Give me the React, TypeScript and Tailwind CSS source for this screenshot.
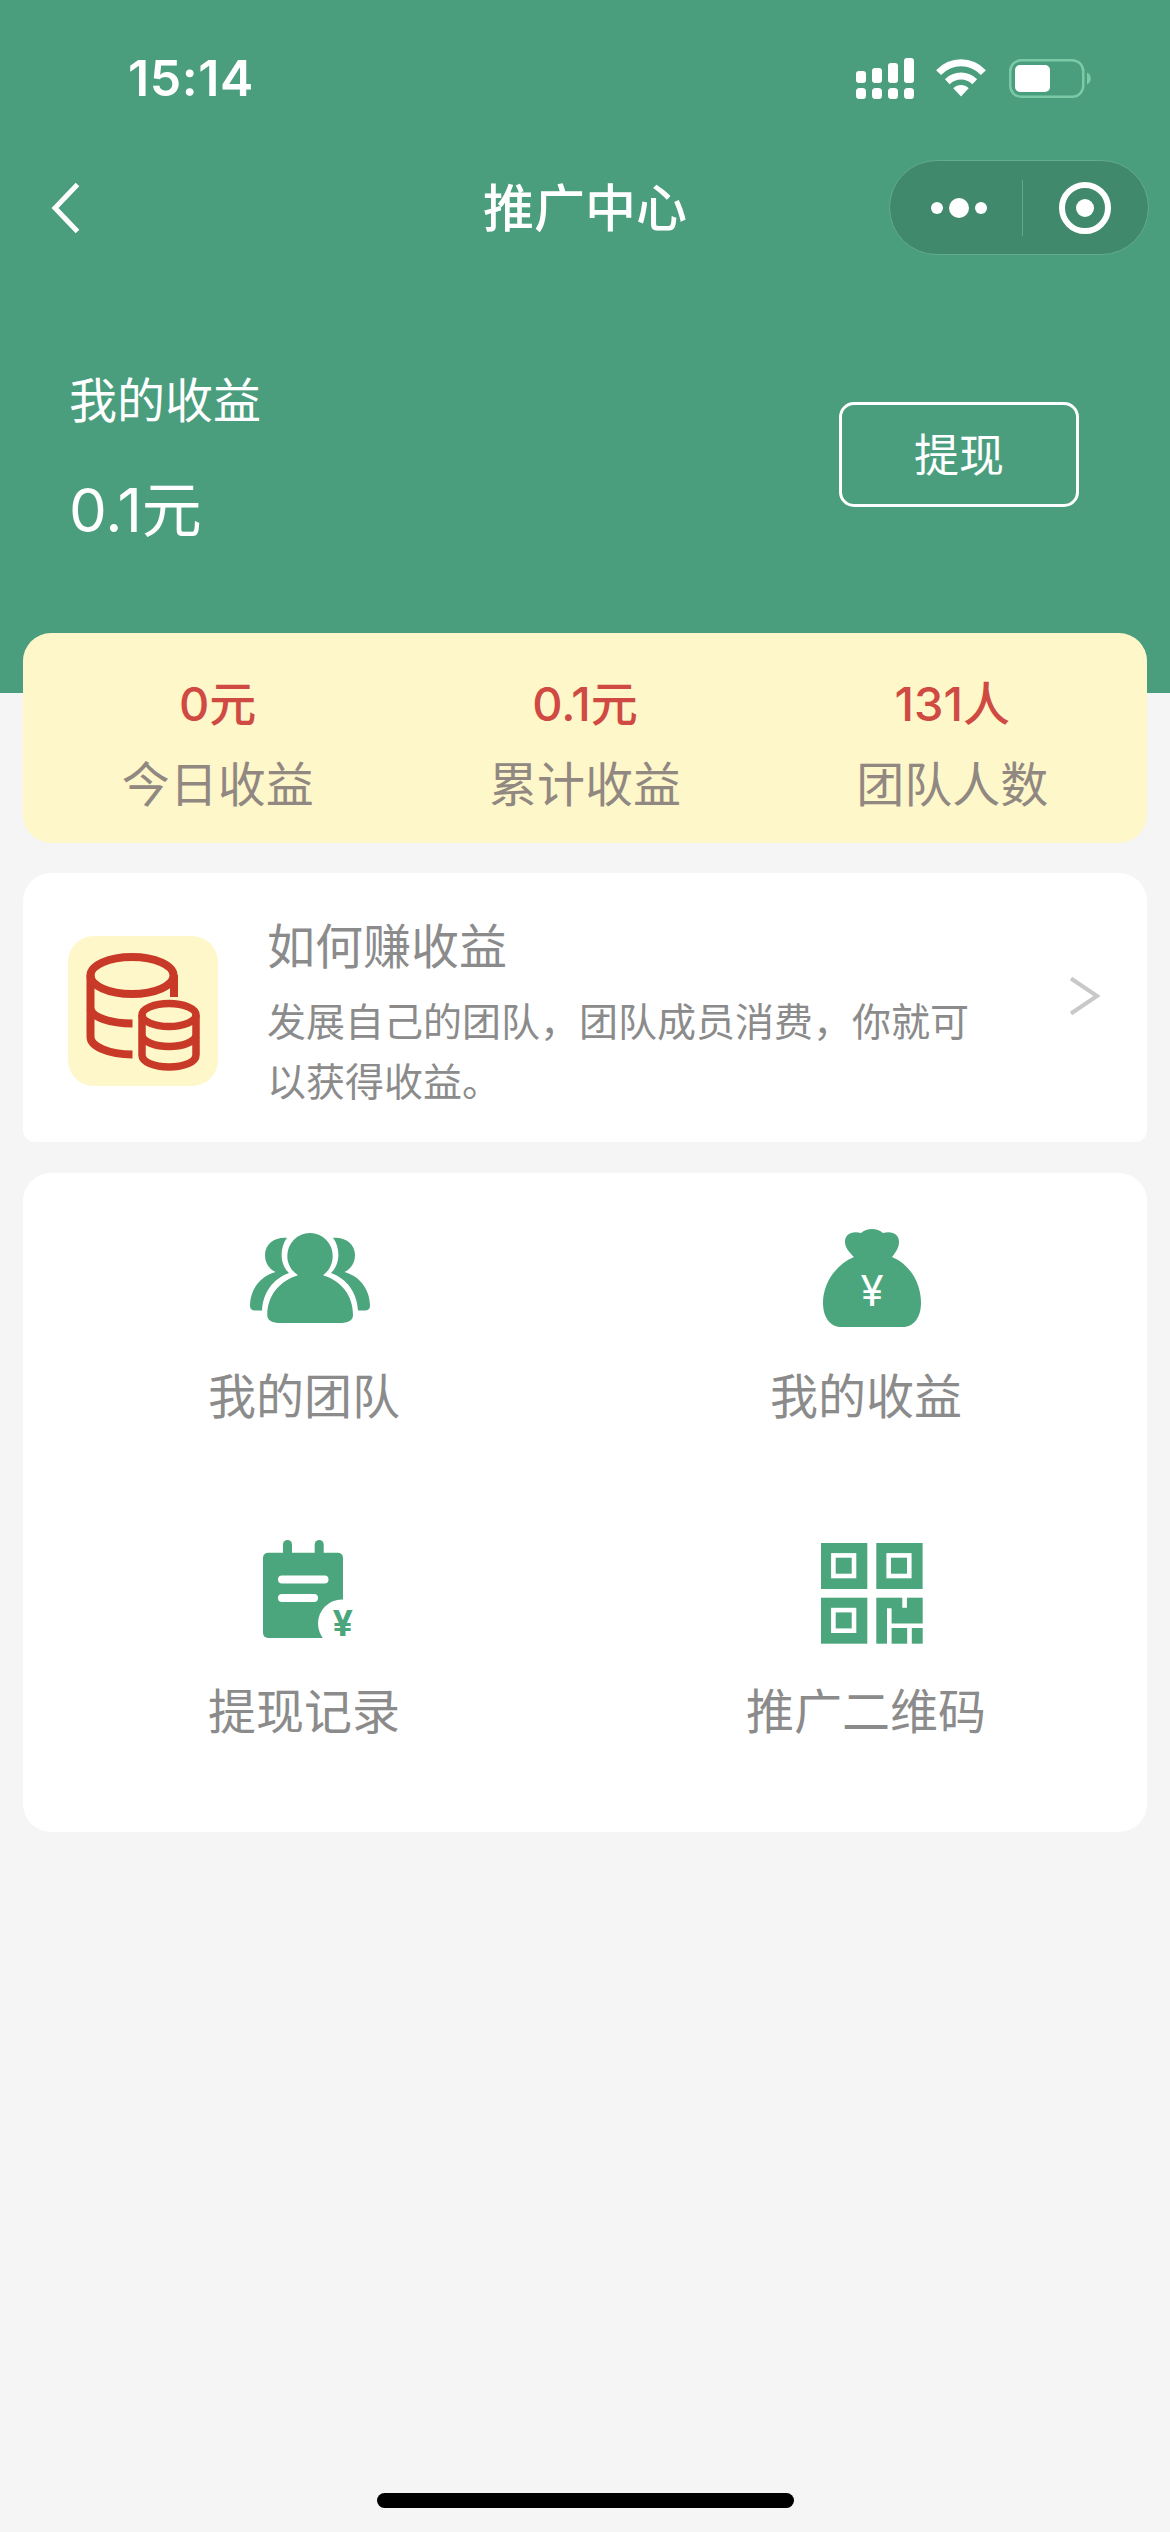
import React from 'react';

const SignalIcon = () => (
  <svg width="58" height="41" viewBox="0 0 58 41" fill="#fff">
    <rect x="0" y="13" width="10" height="12" rx="3" />
    <rect x="16" y="10" width="10" height="15" rx="3" />
    <rect x="32" y="5" width="10" height="20" rx="3" />
    <rect x="48" y="0" width="10" height="25" rx="3" />
    <rect x="0" y="30" width="10" height="11" rx="3.5" />
    <rect x="16" y="30" width="10" height="11" rx="3.5" />
    <rect x="32" y="30" width="10" height="11" rx="3.5" />
    <rect x="48" y="30" width="10" height="11" rx="3.5" />
  </svg>
);

const WifiIcon = () => (
  <svg width="50" height="38" viewBox="0 0 50 38" fill="none" stroke="#fff" strokeWidth="7">
    <path d="M2.6 13.6C15.5 0.6 34.5 0.6 47.4 13.6" />
    <path d="M11.3 22.7C19.2 15.2 30.8 15.2 38.7 22.7" />
    <path d="M17.3 29.2C21.8 25 28.2 25 32.7 29.2L25 37.5Z" fill="#fff" stroke="none" />
  </svg>
);

const BatteryIcon = () => (
  <svg width="82" height="39" viewBox="0 0 82 39">
    <rect x="1.25" y="1.25" width="73" height="36.5" rx="11" fill="none" stroke="#7cc9a8" strokeWidth="2.5" />
    <rect x="6" y="6" width="35" height="27" rx="5" fill="#fff" />
    <path d="M78 13.5C83 15.5 83 23.5 78 25.5Z" fill="#7cc9a8" />
  </svg>
);

const CoinsIcon = () => (
  <svg width="150" height="150" viewBox="0 0 150 150" fill="none" stroke="#c83a27" strokeWidth="8">
    <ellipse cx="64" cy="39.5" rx="41.5" ry="18.5" />
    <path d="M22.5 39V101C22.5 110 40 118.5 64.5 118.5" />
    <path d="M22.5 73C24 81 42 87.5 64.5 87.5" />
    <path d="M106 39V61" />
    <g strokeWidth="7.5">
      <ellipse cx="101" cy="79" rx="27" ry="11.5" />
      <path d="M74 79V119C74 126 86 131 101 131S128 126 128 119V79" />
      <path d="M74 100C76 106 87 110.5 101 110.5S126 106 128 100" />
    </g>
  </svg>
);

const TeamIcon = () => {
  const side =
    'M37 4.8C26 3.6 15 10 15 22C15 29.5 19 36 25.5 39C9 43.5 0 58 0 72.5Q0 77.5 5 77.5H12C13 60 22.5 46 39 40C29.5 31 29.5 15 37 4.8Z';
  return (
    <svg width="120" height="90" viewBox="0 0 120 90" fill="#4ba67d">
      <path d={side} />
      <path d={side} transform="matrix(-1 0 0 1 120 0)" />
      <path d="M37.3 22.7A22.7 22.7 0 1 1 82.7 22.7C82.7 31 79 38 73 42.2C92 48 103 63 103 82Q103 90 89 90H31Q17.3 90 17.3 82C17.3 63 29 48 48 42.2C41.5 38 37.3 31 37.3 22.7Z" />
    </svg>
  );
};

const MoneyBagIcon = () => (
  <svg width="98" height="98" viewBox="0 0 98 98" fill="#4ba67d">
    <path d="M31 28C26 23 22 18.5 22 13C22 5 29 1.5 38 4C44 -1.3 54 -1.3 60 4C69 1.5 76 5 76 13C76 18.5 73 23 69 28C88 36 98 55 98 74C98 88 91 98 80 98H18C7 98 0 88 0 74C0 55 12 36 31 28Z" />
    <text x="49" y="77" textAnchor="middle" fontSize="42" fill="#fff">¥</text>
  </svg>
);

const RecordIcon = () => (
  <svg width="94" height="106" viewBox="0 0 94 106" fill="#4ba67d">
    <rect x="0" y="12.7" width="80" height="85.3" rx="5" />
    <rect x="20" y="0" width="9" height="22" rx="4.5" />
    <rect x="51.7" y="0" width="9" height="22" rx="4.5" />
    <rect x="15" y="35.5" width="50.5" height="8" rx="4" fill="#fff" />
    <rect x="15" y="54" width="40" height="8" rx="4" fill="#fff" />
    <circle cx="79" cy="83.5" r="24" fill="#fff" />
    <text x="79.7" y="96" textAnchor="middle" fontSize="36" fontWeight="700">¥</text>
  </svg>
);

const QrIcon = () => (
  <svg width="102" height="101" viewBox="0 0 102 101" fill="#4ba67d">
    {[[0, 0], [55.3, 0], [0, 54.7]].map(([x, y]) => (
      <g key={`${x}-${y}`} transform={`translate(${x} ${y})`}>
        <rect width="46.3" height="46" />
        <rect x="12.4" y="12.4" width="20.6" height="20.6" fill="none" stroke="#fff" strokeWidth="4.6" />
      </g>
    ))}
    <rect x="55.3" y="54.7" width="46.4" height="46" />
    <path
      d="M83.6 54V64.7M68.3 65.3V101M68.3 82.8H102M88.5 82.8V101"
      fill="none"
      stroke="#fff"
      strokeWidth="4.6"
    />
  </svg>
);

const stats = [
  { value: '0元', label: '今日收益' },
  { value: '0.1元', label: '累计收益' },
  { value: '131人', label: '团队人数' }
];

const menu = [
  { label: '我的团队', icon: <TeamIcon />, row: 'pt-[47px]' },
  { label: '我的收益', icon: <MoneyBagIcon />, row: 'pt-[47px]' },
  { label: '提现记录', icon: <RecordIcon />, row: 'pt-[33px]' },
  { label: '推广二维码', icon: <QrIcon />, row: 'pt-[33px]' }
];

export default function App() {
  return (
    <div className="flex h-[2532px] w-[1170px] flex-col overflow-hidden bg-[#f5f5f5] font-['Inter','Noto_Sans_CJK_SC',sans-serif] text-[#8b8b8b]">
      {/* Header */}
      <header className="h-[693px] shrink-0 bg-[#4a9e7e] text-white">
        <div className="flex h-[156px] items-center justify-between pr-[79px] pl-[128px]">
          <span className="text-[50px] leading-[60px] font-semibold tracking-[0.6px]">15:14</span>
          <div className="flex items-center">
            <SignalIcon />
            <div className="ml-[22px]">
              <WifiIcon />
            </div>
            <div className="ml-[23px]">
              <BatteryIcon />
            </div>
          </div>
        </div>

        <div className="grid h-[103px] grid-cols-3 items-center pr-[21px] pl-[50px]">
          <button className="justify-self-start">
            <svg width="32" height="54" viewBox="0 0 32 54" fill="none" stroke="#fff" strokeWidth="5">
              <path d="M27.5 3.5L5 27L27.5 50.5" />
            </svg>
          </button>
          <h1 className="mt-0.5 mr-[29px] justify-self-center text-[51px] leading-[60px] font-medium whitespace-nowrap">推广中心</h1>
          <div className="flex h-[95px] w-[260px] items-center justify-self-end rounded-full border border-[#64ab8f] bg-[#40896c]">
            <div className="flex flex-1 items-center justify-center gap-1.5 pl-1.5">
              <i className="size-3 rounded-full bg-white" />
              <i className="size-5 rounded-full bg-white" />
              <i className="size-3 rounded-full bg-white" />
            </div>
            <div className="h-14 w-px bg-[#64a78b]" />
            <div className="flex flex-1 items-center justify-center">
              <div className="flex size-[52px] items-center justify-center rounded-full border-[6px] border-white">
                <i className="size-[18px] rounded-full bg-white" />
              </div>
            </div>
          </div>
        </div>

        <div className="flex items-start justify-between pt-[110px] pr-[91px] pl-[69px]">
          <div>
            <p className="text-[48px] leading-[64px]">我的收益</p>
            <p className="mt-[37px] text-[60px] leading-[80px]">0.1元</p>
          </div>
          <button className="mt-[33px] h-[105px] w-[240px] rounded-[15px] border-3 border-white pt-0.5 text-[45px]">提现</button>
        </div>
      </header>

      <main className="-mt-[60px] px-[23px]">
        {/* Stats */}
        <section className="grid h-[210px] grid-cols-3 rounded-[28px] bg-[#fef7ca] px-[11px] pt-[39px] text-center">
          {stats.map((s) => (
            <div key={s.label}>
              <p className="text-[47px] leading-[64px] font-medium text-[#cf4a42]">{s.value}</p>
              <p className="mt-[17px] text-[48px] leading-[64px] text-[#918882]">{s.label}</p>
            </div>
          ))}
        </section>

        {/* How to earn */}
        <section className="mt-[30px] flex h-[269px] rounded-t-[28px] rounded-b-[12px] bg-white pr-[46px] pl-[45px]">
          <div className="mt-[63px] size-[150px] shrink-0 rounded-[26px] bg-[#fef7ca]">
            <CoinsIcon />
          </div>
          <div className="ml-[49px] w-[710px] pt-[42px]">
            <h2 className="text-[48px] leading-[64px]">如何赚收益</h2>
            <p className="mt-[13px] text-[39px] leading-[60px]">发展自己的团队，团队成员消费，你就可以获得收益。</p>
          </div>
          <svg className="mt-[103px] ml-auto" width="32" height="40" viewBox="0 0 32 40" fill="none" stroke="#c8c8c8" strokeWidth="4">
            <path d="M2 2.5L28 20L2 37.5" />
          </svg>
        </section>

        {/* Menu */}
        <section className="mt-[31px] grid h-[659px] grid-cols-2 grid-rows-[329px_330px] rounded-[28px] bg-white">
          {menu.map((m) => (
            <div key={m.label} className={`flex flex-col items-center ${m.row}`}>
              <div className="flex h-[116px] items-center pl-3">{m.icon}</div>
              <p className="mt-[29px] text-[48px] leading-[64px]">{m.label}</p>
            </div>
          ))}
        </section>
      </main>

      {/* Home indicator */}
      <div className="mx-auto mt-auto mb-6 h-[15px] w-[417px] rounded-full bg-black" />
    </div>
  );
}
